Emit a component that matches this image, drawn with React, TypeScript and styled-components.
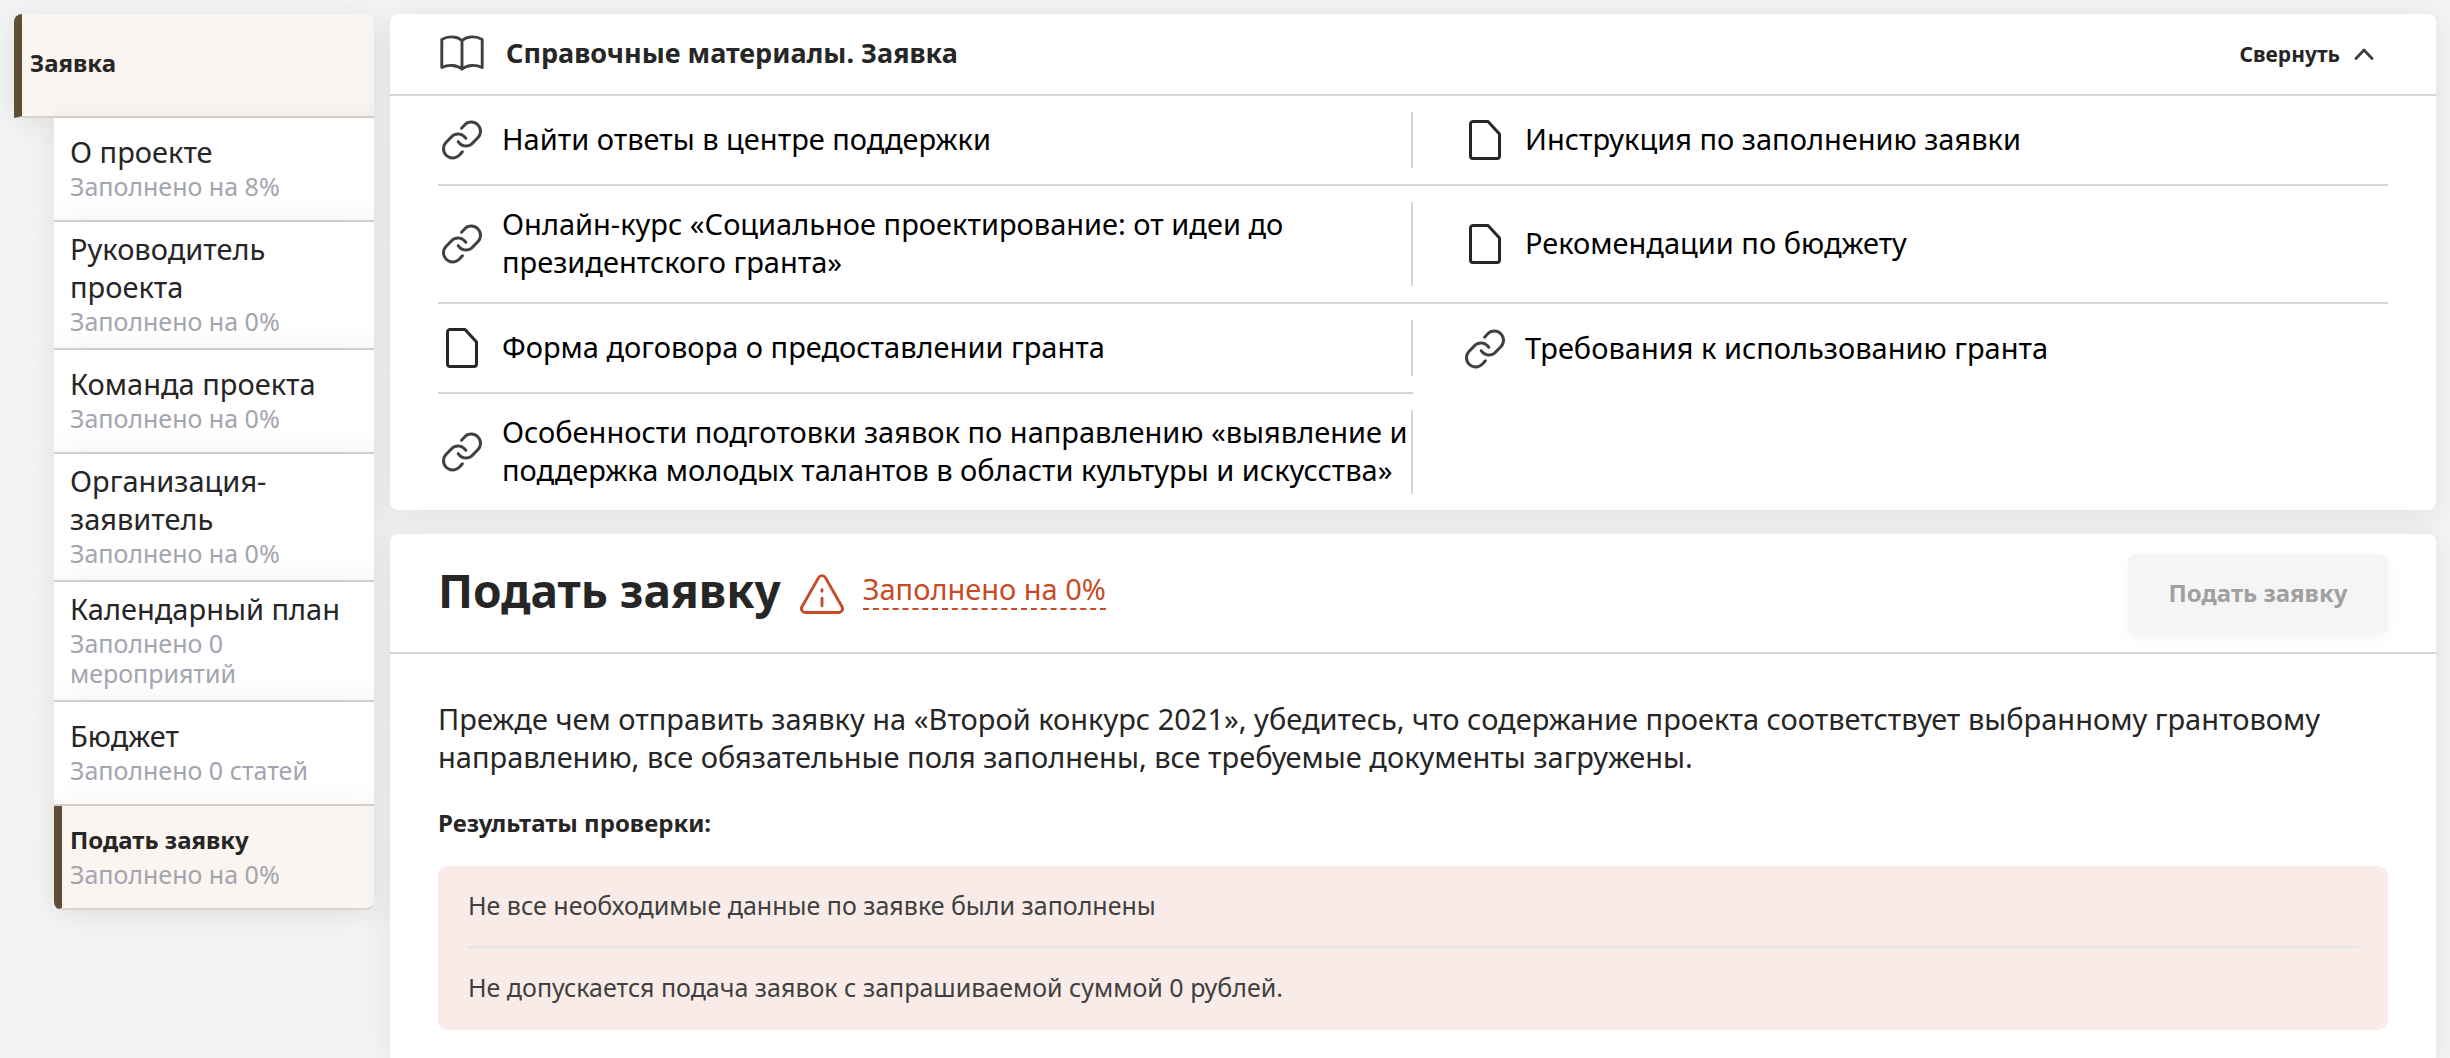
import React, { useState } from "react";
import styled, { createGlobalStyle, css } from "styled-components";

const color = {
  page: "#f4f4f4",
  panel: "#ffffff",
  ink: "#262626",
  muted: "#a3a5b0",
  line: "#d8d3ce",
  cream: "#faf5f0",
  brown: "#5f4e37",
  danger: "#c64b26",
  dangerSoft: "#f9ece8",
  dangerLine: "#e1e6ea",
};

const cardShadow = "0 4px 32px rgba(0, 0, 0, 0.09)";

const GlobalStyle = createGlobalStyle`
  * { box-sizing: border-box; }
  body {
    margin: 0;
    background: ${color.page};
    color: ${color.ink};
    font-family: "Noto Sans", "Open Sans", sans-serif;
    font-size: 29px;
    line-height: 38px;
  }
  h1, h2, h3, p, ul { margin: 0; padding: 0; }
  ul { list-style: none; }
  a { color: inherit; text-decoration: none; }
  button { font-family: inherit; }
`;

const Page = styled.div`
  display: flex;
  gap: 16px;
  min-height: 100vh;
  padding: 14px 14px 0;
`;

const Sidebar = styled.nav`
  flex: none;
  width: 360px;
`;

const StepList = styled.ul`
  padding-left: 40px;
`;

const activeStep = css`
  padding-left: 8px;
  border-left: 8px solid ${color.brown};
  background: ${color.cream};
`;

const Step = styled.a<{ $active?: boolean; $place?: "first" | "last" }>`
  display: flex;
  flex-direction: column;
  justify-content: center;
  min-height: 104px;
  padding: 8px 16px 12px;
  border-bottom: 2px solid ${color.line};
  background: ${color.panel};
  box-shadow: ${cardShadow};
  ${(p) => p.$active && activeStep}
  ${(p) => p.$place === "first" && "border-radius: 8px 8px 0 0;"}
  ${(p) => p.$place === "last" && "border-radius: 0 0 8px 8px;"}
`;

const StepTitle = styled.span<{ $strong?: boolean }>`
  ${(p) => p.$strong && "font-size: 24px; font-weight: 700;"}
`;

const StepNote = styled.span`
  color: ${color.muted};
  font-size: 25px;
  line-height: 30px;
`;

const Main = styled.main`
  flex: 1;
  min-width: 0;
  display: flex;
  flex-direction: column;
`;

const Card = styled.section`
  margin-bottom: 24px;
  border-radius: 8px;
  background: ${color.panel};
  box-shadow: ${cardShadow};
`;

const GuideHeader = styled.header`
  display: flex;
  align-items: center;
  justify-content: space-between;
  height: 82px;
  padding: 0 62px 0 48px;
  border-bottom: 2px solid ${color.line};
`;

const GuideTitle = styled.h2`
  display: flex;
  align-items: center;
  gap: 20px;
  padding-bottom: 2px;
  font-size: 27px;
  line-height: 38px;
`;

const IconBox = styled.span`
  flex: none;
  display: flex;
  justify-content: center;
  width: 48px;
`;

const CollapseButton = styled.button`
  display: flex;
  align-items: center;
  gap: 14px;
  padding: 0;
  border: 0;
  background: none;
  color: ${color.ink};
  font-size: 21px;
  font-weight: 700;
  line-height: 38px;
  cursor: pointer;
`;

const GuideGrid = styled.div`
  display: grid;
  grid-template-columns: 1fr 1fr;
  padding: 0 48px;
`;

const GuideCell = styled.div<{ $line: boolean }>`
  padding: 16px 0;
  border-bottom: ${(p) => (p.$line ? `2px solid ${color.line}` : "0")};
`;

const GuideLink = styled.a<{ $side: "left" | "right" }>`
  display: flex;
  align-items: center;
  gap: 16px;
  height: 100%;
  min-height: 56px;
  padding: 3px 0;
  color: #000000;
  ${(p) =>
    p.$side === "left"
      ? `border-right: 2px solid ${color.line};`
      : "padding-left: 48px;"}
`;

const GuideText = styled.span`
  padding-bottom: 2px;
`;

const SubmitHeader = styled.header`
  display: flex;
  align-items: center;
  justify-content: space-between;
  padding: 20px 48px 18px;
  border-bottom: 2px solid ${color.line};
`;

const SubmitHeading = styled.div`
  display: flex;
  align-items: center;
  gap: 19px;
`;

const SubmitTitle = styled.h1`
  padding-bottom: 8px;
  font-size: 46px;
  line-height: 56px;
`;

const Progress = styled.a`
  margin-bottom: 8px;
  border-bottom: 2px dashed ${color.danger};
  color: ${color.danger};
`;

const SubmitButton = styled.button`
  width: 260px;
  height: 80px;
  padding: 0 0 4px;
  border: 0;
  border-radius: 8px;
  background: #f5f5f5;
  box-shadow: 0 4px 16px rgba(0, 0, 0, 0.04);
  color: #a0a0a0;
  font-size: 24px;
  font-weight: 700;
`;

const SubmitCard = styled(Card)`
  flex: 1;
  margin-bottom: 0;
  border-radius: 8px 8px 0 0;
`;

const SubmitBody = styled.div`
  padding: 46px 48px 28px;
`;

const ResultTitle = styled.h3`
  margin: 28px 0 24px;
  font-size: 24px;
  line-height: 38px;
`;

const ErrorList = styled.ul`
  padding: 0 30px 2px;
  border-radius: 10px;
  background: ${color.dangerSoft};
`;

const ErrorItem = styled.li`
  padding: 20px 0 22px;
  color: #404040;
  font-size: 25px;
  line-height: 38px;

  & + & {
    border-top: 2px solid ${color.dangerLine};
  }
`;

const BookIcon = () => (
  <svg width="44" height="36" viewBox="0 0 44 36" fill="none" stroke="#404040" strokeWidth="2.9" strokeLinecap="round" strokeLinejoin="round" aria-hidden="true">
    <path d="M22 5.500C16.500 1 8 0.800 1.800 4.400v28.100C8 29.500 16.500 29.500 22 34c5.500-4.500 14-4.500 20.200-1.500V4.400C36 0.800 27.500 1 22 5.500Z" />
    <path d="M22 5.500V34" />
  </svg>
);

const LinkIcon = () => (
  <svg width="40" height="40" viewBox="0 0 40 40" fill="none" stroke="#404040" strokeWidth="3" strokeLinecap="round" aria-hidden="true">
    <path d="M19.600 8.200l3.200-3.400a9.200 9.200 0 0 1 13 0a9.200 9.200 0 0 1 0 13l-6.200 6.300a9.200 9.200 0 0 1-13.400-2.400" />
    <path d="M20.400 31.800l-3.200 3.400a9.200 9.200 0 0 1-13 0a9.200 9.200 0 0 1 0-13l6.200-6.300a9.200 9.200 0 0 1 13.400 2.400" />
  </svg>
);

const FileIcon = () => (
  <svg width="32" height="40" viewBox="0 0 32 40" fill="none" stroke="#262626" strokeWidth="3" strokeLinejoin="round" aria-hidden="true">
    <path d="M4 1.500h15L30.500 14v22a2.500 2.500 0 0 1-2.500 2.500H4A2.500 2.500 0 0 1 1.500 36V4A2.500 2.500 0 0 1 4 1.500Z" />
  </svg>
);

const ChevronIcon = ({ up }: { up: boolean }) => (
  <svg width="20" height="12" viewBox="0 0 20 12" fill="none" stroke="#404040" strokeWidth="2.800" strokeLinecap="round" strokeLinejoin="round" aria-hidden="true">
    <path d={up ? "M2 10.500l8-8.500 8 8.500" : "M2 1.500l8 8.500 8-8.500"} />
  </svg>
);

const WarningIcon = () => (
  <svg width="44" height="40" viewBox="0 0 44 40" fill="none" stroke={color.danger} strokeWidth="2.900" strokeLinecap="round" strokeLinejoin="round" aria-hidden="true">
    <path d="M18.600 3.600L2 32.800a3.800 3.800 0 0 0 3.300 5.700h33.400a3.800 3.800 0 0 0 3.300-5.700L25.400 3.600a3.900 3.900 0 0 0-6.800 0Z" />
    <path d="M22 24.200v7.600M22 15.800v1.400" />
  </svg>
);

const steps = [
  { title: "О проекте", note: "Заполнено на 8%" },
  { title: "Руководитель проекта", note: "Заполнено на 0%" },
  { title: "Команда проекта", note: "Заполнено на 0%" },
  { title: "Организация-заявитель", note: "Заполнено на 0%" },
  { title: "Календарный план", note: "Заполнено 0 мероприятий" },
  { title: "Бюджет", note: "Заполнено 0 статей" },
  { title: "Подать заявку", note: "Заполнено на 0%", active: true },
];

const guides: { kind: "link" | "file"; text: string }[] = [
  { kind: "link", text: "Найти ответы в центре поддержки" },
  { kind: "file", text: "Инструкция по заполнению заявки" },
  { kind: "link", text: "Онлайн-курс «Социальное проектирование: от идеи до президентского гранта»" },
  { kind: "file", text: "Рекомендации по бюджету" },
  { kind: "file", text: "Форма договора о предоставлении гранта" },
  { kind: "link", text: "Требования к использованию гранта" },
  { kind: "link", text: "Особенности подготовки заявок по направлению «выявление и поддержка молодых талантов в области культуры и искусства»" },
];

const errors = [
  "Не все необходимые данные по заявке были заполнены",
  "Не допускается подача заявок с запрашиваемой суммой 0 рублей.",
];

export default function App() {
  const [open, setOpen] = useState(true);

  return (
    <>
      <GlobalStyle />
      <Page>
        <Sidebar>
          <Step href="#application" $active $place="first">
            <StepTitle $strong>Заявка</StepTitle>
          </Step>
          <StepList>
            {steps.map((step) => (
              <li key={step.title}>
                <Step href="#step" $active={step.active} $place={step.active ? "last" : undefined}>
                  <StepTitle $strong={step.active}>{step.title}</StepTitle>
                  <StepNote>{step.note}</StepNote>
                </Step>
              </li>
            ))}
          </StepList>
        </Sidebar>

        <Main>
          <Card>
            <GuideHeader>
              <GuideTitle>
                <IconBox><BookIcon /></IconBox>
                Справочные материалы. Заявка
              </GuideTitle>
              <CollapseButton type="button" aria-expanded={open} onClick={() => setOpen(!open)}>
                {open ? "Свернуть" : "Развернуть"}
                <ChevronIcon up={open} />
              </CollapseButton>
            </GuideHeader>
            {open && (
              <GuideGrid>
                {guides.map((guide, index) => (
                  <GuideCell key={guide.text} $line={index + 2 < guides.length}>
                    <GuideLink href="#guide" $side={index % 2 === 0 ? "left" : "right"}>
                      <IconBox>{guide.kind === "link" ? <LinkIcon /> : <FileIcon />}</IconBox>
                      <GuideText>{guide.text}</GuideText>
                    </GuideLink>
                  </GuideCell>
                ))}
              </GuideGrid>
            )}
          </Card>

          <SubmitCard>
            <SubmitHeader>
              <SubmitHeading>
                <SubmitTitle>Подать заявку</SubmitTitle>
                <WarningIcon />
                <Progress href="#progress">Заполнено на 0%</Progress>
              </SubmitHeading>
              <SubmitButton type="button" disabled>Подать заявку</SubmitButton>
            </SubmitHeader>
            <SubmitBody>
              <p>
                Прежде чем отправить заявку на «Второй конкурс 2021», убедитесь, что содержание проекта соответствует выбранному грантовому
                направлению, все обязательные поля заполнены, все требуемые документы загружены.
              </p>
              <ResultTitle>Результаты проверки:</ResultTitle>
              <ErrorList>
                {errors.map((error) => (
                  <ErrorItem key={error}>{error}</ErrorItem>
                ))}
              </ErrorList>
            </SubmitBody>
          </SubmitCard>
        </Main>
      </Page>
    </>
  );
}
